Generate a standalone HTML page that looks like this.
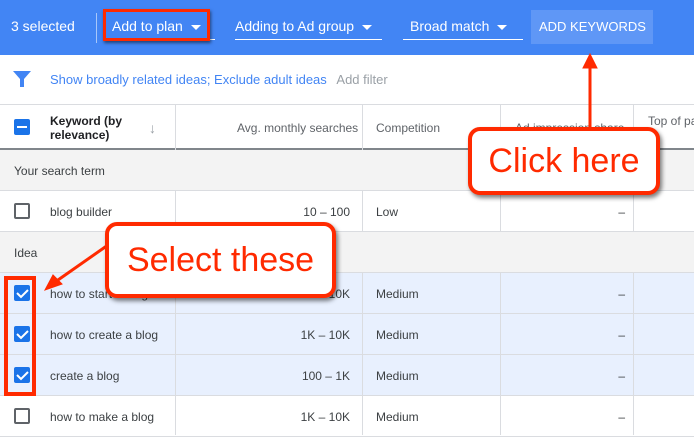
<!DOCTYPE html>
<html><head><style>
*{box-sizing:border-box;margin:0;padding:0}
body{width:694px;height:435px;overflow:hidden;font-family:"Liberation Sans",sans-serif;background:#fff;position:relative;color:#3c4043}
.top{position:absolute;left:0;top:0;width:694px;height:55px;background:#4285f4;color:#fff;font-size:14px}
.top span{position:absolute;top:18px;white-space:nowrap}
.ul{position:absolute;height:1px;background:#fff;top:39px}
.tri{display:inline-block;width:0;height:0;border-left:5px solid transparent;border-right:5px solid transparent;border-top:5px solid #fff;vertical-align:middle;margin-left:8px}
.abs{position:absolute;white-space:nowrap}
.row{position:absolute;left:0;width:694px;border-bottom:1px solid #dadce0;font-size:12px}
.num{position:absolute;right:344px;top:14px}
.dash{position:absolute;right:69px;top:14px}
.vl{position:absolute;top:104px;width:1px;background:#dadce0}
.cb{position:absolute;left:14px;width:16px;height:16px;border:2px solid #5f6368;border-radius:2px}
.cbc{position:absolute;left:14px;width:16px;height:16px;background:#1a73e8;border-radius:2px}
.red{position:absolute;border:4px solid #ff2a00;border-radius:12px;background:#fff;color:#ff2a00;font-size:34px;text-align:center;box-shadow:2px 3px 4px rgba(0,0,0,.5)}
</style></head><body>
<div class="top">
<span style="left:11px">3 selected</span>
<div class="abs" style="left:96px;top:13px;width:1px;height:30px;background:#a8c7fa"></div>
<span style="left:112px">Add to plan<i class="tri"></i></span>
<div class="ul" style="left:105px;width:110px"></div>
<span style="left:235px">Adding to Ad group<i class="tri"></i></span>
<div class="ul" style="left:235px;width:147px"></div>
<span style="left:410px">Broad match<i class="tri"></i></span>
<div class="ul" style="left:403px;width:120px"></div>
<div class="abs" style="left:531px;top:10px;width:122px;height:34px;background:#5f97f6"></div>
<span style="left:539px;font-size:13px;top:19px">ADD KEYWORDS</span>
<div class="abs" style="left:103px;top:9px;width:107px;height:32px;border:3px solid #ff2a00;box-shadow:1px 2px 3px rgba(0,0,0,.5)"></div>
</div>
<svg class="abs" style="left:12px;top:69px" width="20" height="20" viewBox="0 0 20 20"><path d="M1 2h18l-7 8v8h-4v-8z" fill="#4285f4"/></svg>
<div class="abs" style="left:50px;top:72px;font-size:13px;color:#4285f4">Show broadly related ideas; Exclude adult ideas <span style="color:#9aa0a6;margin-left:6px">Add filter</span></div>
<div class="row" style="top:104px;height:46px;border-top:1px solid #dadce0;border-bottom:2px solid #80868b;background:#fff;overflow:hidden">
<div class="cbc" style="top:14px"><div style="position:absolute;left:3px;top:7px;width:10px;height:2px;background:#fff"></div></div>
<div class="abs" style="left:50px;top:9px;font-weight:bold;color:#202124;line-height:14px">Keyword (by<br>relevance)</div>
<div class="abs" style="left:149px;top:15px;color:#9aa0a6;font-size:14px">↓</div>
<div class="abs" style="left:237px;top:16px;color:#5f6368">Avg. monthly searches</div>
<div class="abs" style="left:376px;top:16px;color:#5f6368">Competition</div>
<div class="abs" style="left:515px;top:16px;color:#5f6368">Ad impression share</div>
<div class="abs" style="left:648px;top:9px;color:#5f6368">Top of page</div>
</div>
<div class="row" style="top:150px;height:41px;background:#f3f3f3"><div class="abs" style="left:14px;top:14px">Your search term</div></div>
<div class="row" style="top:191px;height:41px"><div class="cb" style="top:12px"></div><div class="abs" style="left:50px;top:14px">blog builder</div><div class="num">10 – 100</div><div class="abs" style="left:376px;top:14px">Low</div><div class="dash">–</div></div>
<div class="row" style="top:232px;height:41px;background:#f3f3f3"><div class="abs" style="left:14px;top:14px">Idea</div></div>
<div class="row" style="top:273px;height:41px;background:#e8f0fe"><div class="cbc" style="top:12px"></div><div class="abs" style="left:50px;top:14px">how to start a blog</div><div class="num">1K – 10K</div><div class="abs" style="left:376px;top:14px">Medium</div><div class="dash">–</div></div>
<div class="row" style="top:314px;height:41px;background:#e8f0fe"><div class="cbc" style="top:12px"></div><div class="abs" style="left:50px;top:14px">how to create a blog</div><div class="num">1K – 10K</div><div class="abs" style="left:376px;top:14px">Medium</div><div class="dash">–</div></div>
<div class="row" style="top:355px;height:41px;background:#e8f0fe"><div class="cbc" style="top:12px"></div><div class="abs" style="left:50px;top:14px">create a blog</div><div class="num">100 – 1K</div><div class="abs" style="left:376px;top:14px">Medium</div><div class="dash">–</div></div>
<div class="row" style="top:396px;height:41px"><div class="cb" style="top:12px"></div><div class="abs" style="left:50px;top:14px">how to make a blog</div><div class="num">1K – 10K</div><div class="abs" style="left:376px;top:14px">Medium</div><div class="dash">–</div></div>
<div class="vl" style="left:175px;height:46px"></div><div class="vl" style="left:362px;height:46px"></div><div class="vl" style="left:500px;height:46px"></div><div class="vl" style="left:633px;height:46px"></div>
<div class="vl" style="left:175px;top:191px;height:41px"></div><div class="vl" style="left:500px;top:191px;height:41px"></div><div class="vl" style="left:633px;top:191px;height:41px"></div><div class="vl" style="left:362px;top:191px;height:41px"></div>
<div class="vl" style="left:175px;top:273px;height:162px"></div><div class="vl" style="left:362px;top:273px;height:162px"></div><div class="vl" style="left:500px;top:273px;height:162px"></div><div class="vl" style="left:633px;top:273px;height:162px"></div>
<svg class="abs" style="left:0;top:0" width="694" height="435">
<g stroke="#fff" stroke-width="2" fill="none"><path d="M17 293l4 4 7-7"/><path d="M17 334l4 4 7-7"/><path d="M17 375l4 4 7-7"/></g>
<g stroke="#ff2a00" fill="#ff2a00"><line x1="590" y1="66" x2="590" y2="130" stroke-width="3"/><path d="M583 68l7-14 7 14z"/>
<line x1="108" y1="245" x2="58" y2="280" stroke-width="3"/><path d="M45 290l8-15 9 9z"/></g>
<rect x="6" y="278" width="28" height="116" fill="none" stroke="#ff2a00" stroke-width="4"/>
</svg>
<div class="red" style="left:468px;top:127px;width:192px;height:68px;line-height:60px">Click here</div>
<div class="red" style="left:105px;top:222px;width:231px;height:76px;line-height:68px">Select these</div>
</body></html>
